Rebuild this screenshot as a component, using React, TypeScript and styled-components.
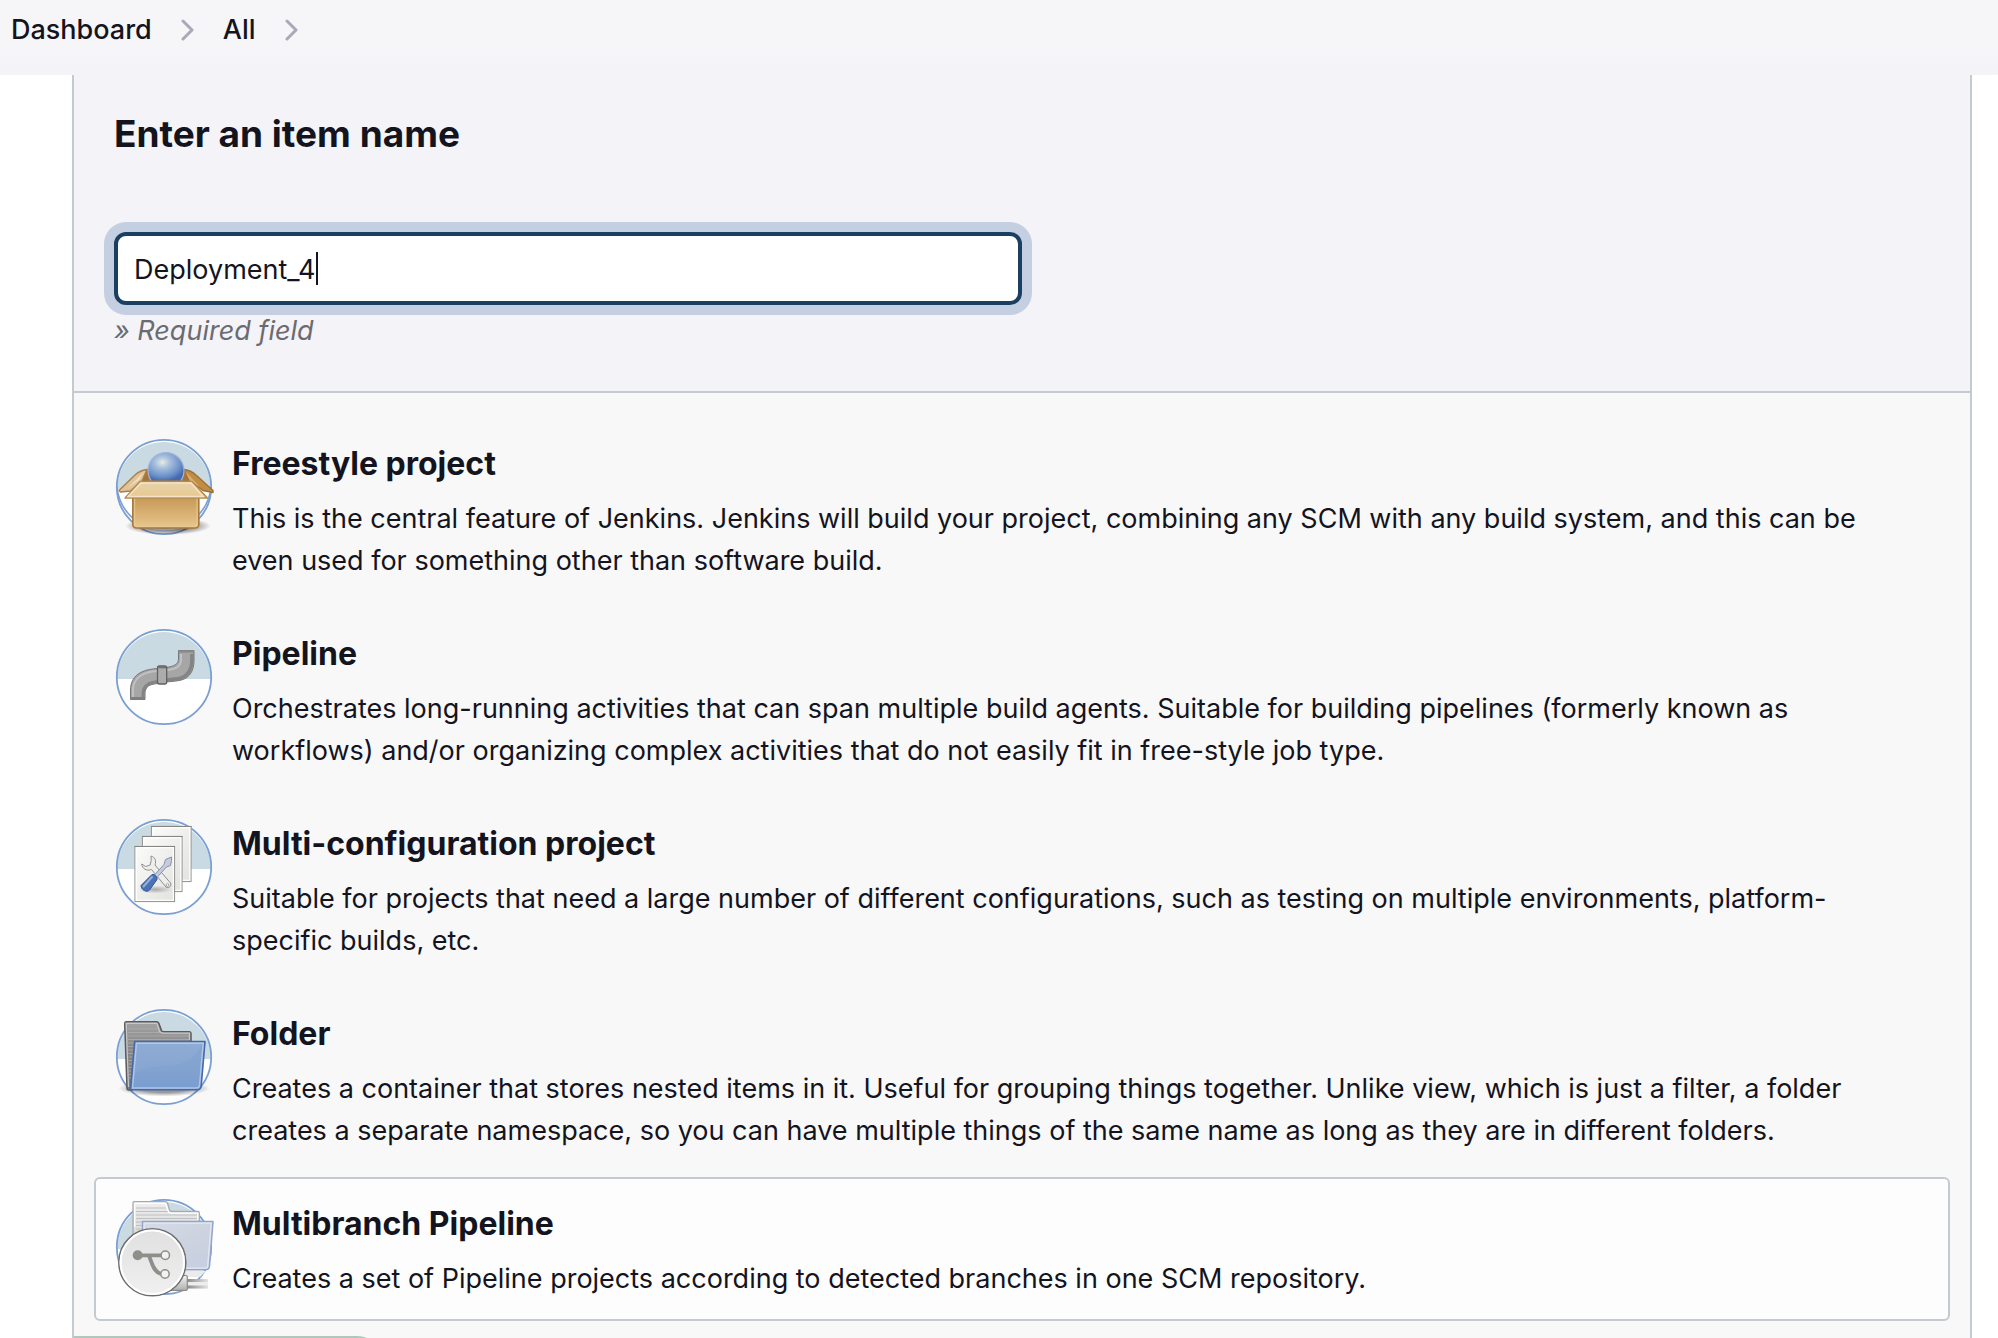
import React, { useLayoutEffect, useRef, useState } from "react";
import styled, { createGlobalStyle } from "styled-components";

const GlobalStyle = createGlobalStyle`
  *, *::before, *::after { box-sizing: border-box; }
  body {
    margin: 0;
    background: #ffffff;
    color: #14141f;
    font-family: Inter, "Noto Sans", sans-serif;
    font-size: 27px;
    line-height: 42px;
  }
`;

const Page = styled.div`
  display: flex;
  flex-direction: column;
  height: 100vh;
  overflow: hidden;
`;

const BreadcrumbBar = styled.nav`
  flex: none;
  background: linear-gradient(#f6f6f8 60%, #f4f4f8);
  padding: 9px 11px 24px;
`;

const Crumbs = styled.ol`
  display: flex;
  align-items: center;
  gap: 29px;
  margin: 0;
  padding: 0;
  list-style: none;
`;

const Crumb = styled.li`
  display: flex;
  align-items: center;
  gap: 28px;
`;

const CrumbLink = styled.a`
  color: inherit;
  font-size: 27px;
  font-weight: 500;
  text-decoration: none;
`;

const Panel = styled.main`
  flex: 1 0 auto;
  margin: 0 26px 0 72px;
  border: solid #c4cacf;
  border-width: 0 2px;
  background: #f8f8f8;
`;

const NameSection = styled.section`
  background: #f3f3f8;
  border-bottom: 2px solid #c4cacf;
  padding: 34px 40px 39px;
`;

const Heading = styled.label`
  display: block;
  margin-bottom: 73px;
  font-size: 37px;
  font-weight: 700;
  line-height: 50px;
`;

const FieldWrap = styled.div`
  position: relative;
  width: 50%;
  max-width: 908px;
`;

const NameInput = styled.input`
  display: block;
  width: 100%;
  height: 73px;
  padding: 2px 16px 0;
  border: 4px solid #1a3f60;
  border-radius: 12px;
  outline: none;
  box-shadow: 0 0 0 10px #c4d0e2;
  background: #ffffff;
  color: inherit;
  caret-color: transparent;
  font: inherit;
`;

const Caret = styled.span`
  position: absolute;
  top: 20px;
  width: 2px;
  height: 33px;
  background: #14141f;
`;

const Hint = styled.p`
  margin: 5px 0 0;
  color: #6b6b70;
  font-style: italic;
`;

const ItemList = styled.ul`
  display: flex;
  flex-direction: column;
  gap: 4px;
  margin: 0;
  padding: 24px 20px 15px;
  list-style: none;
`;

const ItemCard = styled.label<{ $active: boolean }>`
  display: flex;
  align-items: flex-start;
  gap: 20px;
  padding: 20px 20px 19px;
  border: 2px solid ${(p) => (p.$active ? "#c4cacf" : "transparent")};
  border-radius: 6px;
  background: ${(p) => (p.$active ? "#fdfdfd" : "transparent")};
  cursor: pointer;
`;

const ItemRadio = styled.input`
  appearance: none;
  width: 0;
  height: 0;
  margin: 0 -20px 0 0;
`;

const ItemIcon = styled.svg`
  flex: none;
  width: 96px;
  height: 96px;
  overflow: visible;
`;

const ItemText = styled.div`
  flex: 1;
  padding-right: 40px;
`;

const ItemTitle = styled.span`
  display: block;
  margin-bottom: 9px;
  font-size: 32px;
  font-weight: 700;
  line-height: 50px;
`;

const ItemDescription = styled.p`
  margin: 0;
`;

const FooterTab = styled.div`
  width: 304px;
  height: 80px;
  border-radius: 0 20px 0 0;
  background: #b0c8bb;
`;

const Chevron = () => (
  <svg width="14" height="22" viewBox="0 0 14 22" fill="none" aria-hidden="true">
    <path d="M3 2l9 9-9 9" stroke="#a9a9b8" strokeWidth="3" strokeLinecap="round" strokeLinejoin="round" />
  </svg>
);

const Disc = () => (
  <>
    <circle cx="48" cy="48" r="47" fill="#ffffff" />
    <path d="M1 50a47 47 0 0 1 94 0z" fill="#c9dae3" />
    <circle cx="48" cy="48" r="47.2" fill="none" stroke="#7a9fd3" strokeWidth="1.8" />
  </>
);

const FreestyleIcon = () => (
  <ItemIcon viewBox="0 0 96 96" aria-hidden="true">
    <defs>
      <radialGradient id="fsBall" cx="0.4" cy="0.35" r="0.68">
        <stop offset="0" stopColor="#e6ecdf" />
        <stop offset="0.3" stopColor="#a9c1de" />
        <stop offset="0.75" stopColor="#6a8fc9" />
        <stop offset="1" stopColor="#4469ad" />
      </radialGradient>
      <linearGradient id="fsBody" x1="0" y1="0" x2="0" y2="1">
        <stop offset="0" stopColor="#c39450" />
        <stop offset="1" stopColor="#e8c78d" />
      </linearGradient>
      <linearGradient id="fsFlap" x1="0" y1="0" x2="0" y2="1">
        <stop offset="0" stopColor="#e8d3ad" />
        <stop offset="1" stopColor="#e7c88f" />
      </linearGradient>
      <radialGradient id="fsShadow">
        <stop offset="0.5" stopColor="#000" stopOpacity="0.5" />
        <stop offset="1" stopColor="#000" stopOpacity="0" />
      </radialGradient>
    </defs>
    <Disc />
    <ellipse cx="52" cy="87" rx="43" ry="9" fill="url(#fsShadow)" />
    <path d="M1 48a47.2 47.2 0 0 0 94 0" fill="none" stroke="#7a9fd3" strokeWidth="1.6" />
    <path d="M31 30L68 30L77 44L23 44z" fill="#a4753a" />
    <path d="M31 30.5c-6 1-10 3.500-12 5.500L3 51.500l1.500 1.500 10-1L26 42z" fill="#dfc49a" stroke="#ad7f42" strokeWidth="1.400" strokeLinejoin="round" />
    <path d="M28 33L12 49l11-8z" fill="#f1e2c8" />
    <path d="M68 30.500c6 1 10 3.500 12 5.500l17 15.500v2l-10-2L75 42z" fill="#c08d46" stroke="#9d7035" strokeWidth="1.400" strokeLinejoin="round" />
    <path d="M69 32l5 10 10 6z" fill="#dcae6c" />
    <path d="M35 41.500a18 18 0 1 1 30 0z" fill="url(#fsBall)" />
    <path d="M35 41.500a18 18 0 1 1 30 0" fill="none" stroke="#a3b4da" strokeWidth="1.200" />
    <rect x="16.800" y="55" width="66" height="34" rx="3.500" fill="url(#fsBody)" stroke="#a8793c" strokeWidth="1.600" />
    <rect x="18.600" y="57" width="62.400" height="30" rx="2.500" fill="none" stroke="#e9cd9b" strokeOpacity="0.7" strokeWidth="1.200" />
    <path d="M24 42.500H76L91.500 59H9z" fill="url(#fsFlap)" stroke="#b58a4d" strokeWidth="1.400" strokeLinejoin="round" />
    <path d="M25 44H75L87 57.500H12z" fill="none" stroke="#f3e4c8" strokeWidth="1.400" />
  </ItemIcon>
);

const PipelineIcon = () => (
  <ItemIcon viewBox="0 0 96 96" aria-hidden="true">
    <Disc />
    <path d="M62.500 21.500H78V31C78 44 72 51 60 52L50 53V38.500C58 37.500 62.500 35 62.500 30z" fill="#a6a6a6" stroke="#777777" strokeWidth="1" />
    <path d="M75.800 25V31C75.800 43 69 49.500 59 50L50.500 51" fill="none" stroke="#848484" strokeWidth="3.400" />
    <path d="M65 25V31C64.500 38 60 40 51 41" fill="none" stroke="#c2c2c2" strokeWidth="2" />
    <path d="M62.500 22.500H78" stroke="#8b8b8b" strokeWidth="2.400" />
    <path d="M43 39.500C25 40 14.500 47 14.500 61V70.500H29V65C29 57 34 55 43 54.500z" fill="#a6a6a6" stroke="#777777" strokeWidth="1" />
    <path d="M43 52.500C32 53 27 57 27 65V68" fill="none" stroke="#848484" strokeWidth="3" />
    <path d="M42 42C27 42.500 17 49 17 61V68" fill="none" stroke="#c0c0c0" strokeWidth="2" />
    <path d="M14.500 69.300H29" stroke="#808080" strokeWidth="2.600" />
    <rect x="41.500" y="37" width="9.200" height="18" rx="2" fill="#acacac" stroke="#606060" strokeWidth="1.300" />
    <path d="M42.500 38.500H50" stroke="#707070" strokeWidth="1.600" />
  </ItemIcon>
);

const Sheet = ({ x, y }: { x: number; y: number }) => (
  <>
    <rect x={x} y={y} width="39.500" height="55" fill="url(#mcSheet)" stroke="#999996" strokeWidth="1.200" />
    <rect x={x + 1.2} y={y + 1.2} width="37.100" height="52.600" fill="none" stroke="#ffffff" strokeWidth="1.200" />
    <path d={`M${x - 0.5} ${y}h40.500`} stroke="#858582" strokeWidth="1" />
  </>
);

const MultiConfigIcon = () => (
  <ItemIcon viewBox="0 0 96 96" aria-hidden="true">
    <defs>
      <linearGradient id="mcSheet" x1="0" y1="0" x2="1" y2="1">
        <stop offset="0" stopColor="#fbfbfa" />
        <stop offset="1" stopColor="#e2e2df" />
      </linearGradient>
      <radialGradient id="mcShadow">
        <stop offset="0" stopColor="#000" stopOpacity="0.28" />
        <stop offset="1" stopColor="#000" stopOpacity="0" />
      </radialGradient>
    </defs>
    <Disc />
    <Sheet x={35.5} y={7.5} />
    <Sheet x={26.5} y={17.5} />
    <Sheet x={19} y={27.5} />
    <ellipse cx="39" cy="70.500" rx="17" ry="4" fill="url(#mcShadow)" />
    <path
      d="M35 37c4 1 5.500 5 4 9L54.500 64c1.500 2.500-1.500 6-4.500 4L35.500 50.500c-5 2-9.500-1-9.800-5.500l4 2.500 4.500-1.500 1-4.500z"
      fill="#eeeeec"
      stroke="#8f908d"
      strokeWidth="1"
      strokeLinejoin="round"
    />
    <circle cx="51.500" cy="66" r="1.400" fill="#ffffff" stroke="#8f908d" strokeWidth="0.800" />
    <path d="M55.500 38l-6 2.500-1.500 5L38 56.500l2.500 2.500L50.500 48l4-1.500 1-5z" fill="#c5cbdd" stroke="#8089a0" strokeWidth="0.900" strokeLinejoin="round" />
    <path d="M36 55.500c2.500-.500 5.500 2 5 5L33.500 71c-2.500 3-8.500 0-8.500-4.500z" fill="#4a72b4" stroke="#2f5594" strokeWidth="1" />
    <path d="M36 58l-8.500 9.500" stroke="#93b1df" strokeWidth="2" strokeLinecap="round" />
  </ItemIcon>
);

const FolderIcon = () => (
  <ItemIcon viewBox="0 0 96 96" aria-hidden="true">
    <defs>
      <linearGradient id="fdBack" x1="0" y1="0" x2="0" y2="1">
        <stop offset="0" stopColor="#a3a3a3" />
        <stop offset="0.4" stopColor="#868686" />
        <stop offset="1" stopColor="#7a7a7a" />
      </linearGradient>
      <linearGradient id="fdFront" x1="0" y1="0" x2="0" y2="1">
        <stop offset="0" stopColor="#8facd4" />
        <stop offset="0.6" stopColor="#86a5d1" />
        <stop offset="1" stopColor="#7499d0" />
      </linearGradient>
      <radialGradient id="fdShadow">
        <stop offset="0.5" stopColor="#000" stopOpacity="0.4" />
        <stop offset="1" stopColor="#000" stopOpacity="0" />
      </radialGradient>
    </defs>
    <Disc />
    <ellipse cx="48" cy="79.500" rx="46" ry="8" fill="url(#fdShadow)" />
    <path d="M10 12.700H40.500C42.500 12.700 43 14 43.500 16L45.500 21.500Q46 22.700 48 22.700H73.500Q75 22.700 75 24.500V40L16 81H12.500Q11 81 11 79L8.700 14.500Q8.700 12.700 10 12.700z" fill="url(#fdBack)" stroke="#5b5b5b" strokeWidth="1.500" />
    <path d="M12 20H42M12 23.500H44M12 27H73M12 30.500H73M12 34H18M12 37.500H18M12 41H18M12 44.500H17M12.500 48H17M12.500 51.500H17M12.500 55H17M12.500 58.500H16M12.500 62H16M13 65.500H16M13 69H15" stroke="#b0b0b0" strokeOpacity="0.7" strokeWidth="1.200" />
    <path d="M12.500 78L10.200 14.300H41L43.500 22.500 46 24.200H73.500V31" fill="none" stroke="#c8c8c8" strokeWidth="1.200" />
    <path d="M18.700 32.500H89L85.200 77Q84.600 80.800 81.500 80.800H14.500z" fill="url(#fdFront)" stroke="#4469a9" strokeWidth="1.600" strokeLinejoin="round" />
    <path d="M17.500 66C26 57 39 58 54 57C70 55 80 49 86 34.500L83 77C82.500 79 81.500 79.200 79.500 79.200H16.500z" fill="#7ea0d0" fillOpacity="0.5" />
    <path d="M20.500 34.300H87.200L83.500 76.500Q83 79 80.500 79H16.500z" fill="none" stroke="#b9cdea" strokeOpacity="0.85" strokeWidth="1.400" />
  </ItemIcon>
);

const MultibranchIcon = () => (
  <ItemIcon viewBox="0 0 96 96" aria-hidden="true">
    <defs>
      <linearGradient id="mbBack" x1="0" y1="0" x2="0" y2="1">
        <stop offset="0" stopColor="#eeeeee" />
        <stop offset="0.5" stopColor="#dadada" />
      </linearGradient>
      <linearGradient id="mbFront" x1="0" y1="0" x2="1" y2="1">
        <stop offset="0" stopColor="#d5dbe6" />
        <stop offset="0.5" stopColor="#cdd4e0" />
        <stop offset="1" stopColor="#c4cedf" />
      </linearGradient>
      <linearGradient id="mbCable" x1="0" y1="0" x2="1" y2="0">
        <stop offset="0" stopColor="#8a8a88" />
        <stop offset="1" stopColor="#8a8a88" stopOpacity="0.1" />
      </linearGradient>
      <linearGradient id="mbBadge" x1="0" y1="0" x2="0" y2="1">
        <stop offset="0" stopColor="#e0e0e0" />
        <stop offset="1" stopColor="#f0f0f0" />
      </linearGradient>
      <linearGradient id="mbPlug" x1="0" y1="0" x2="0" y2="1">
        <stop offset="0" stopColor="#f2f2f2" />
        <stop offset="1" stopColor="#b0b0ae" />
      </linearGradient>
    </defs>
    <Disc />
    <path d="M18 2.700H49C51 2.700 51.500 3.500 52 5.500L53.500 11Q54 12.500 56 12.500H82Q83.300 12.500 83.300 14V26L30 70H17V4Q17 2.700 18 2.700z" fill="url(#mbBack)" stroke="#aaaaaa" strokeWidth="1.300" />
    <path d="M20 9H50M20 12.500H52M20 16H81M20 19.500H81M20 23H26M20 26.500H26M20 30H26" stroke="#c0c0c0" strokeWidth="1" />
    <path d="M18.700 28V4.300H49.500L52.500 13 55 14.200H81.700V21" fill="none" stroke="#ffffff" strokeWidth="1.200" />
    <path d="M62 72H90L84 78H62z" fill="#ebebeb" />
    <path d="M26.500 22.500H97L93.500 67.500Q93 70.800 89.500 70.800H26.500z" fill="url(#mbFront)" stroke="#8fa5cf" strokeWidth="1.500" strokeLinejoin="round" />
    <path d="M28.200 36V24.200H95.200L91.700 67Q91.500 69.200 89 69.200H66" fill="none" stroke="#e3e8f0" strokeWidth="1.300" />
    <rect x="71" y="80.300" width="21" height="9.500" fill="#ededed" />
    <rect x="71" y="80" width="21" height="3" fill="url(#mbCable)" />
    <rect x="71" y="86.500" width="21" height="3" fill="url(#mbCable)" />
    <path d="M58 79l9-2.500h3q1.300 0 1.300 1.300V90q0 1.300-1.300 1.300H55z" fill="url(#mbPlug)" stroke="#8a8a88" strokeWidth="1.200" />
    <circle cx="36.300" cy="63.300" r="33.500" fill="url(#mbBadge)" stroke="#6e6e6e" strokeWidth="1.500" />
    <circle cx="36.300" cy="63.300" r="31.700" fill="none" stroke="#ffffff" strokeWidth="2" />
    <circle cx="21.700" cy="56.300" r="5" fill="#8d8f88" />
    <path d="M22 56.300H45M32.500 56.300C35.500 60 36 72.500 45 74.800" fill="none" stroke="#8d8f88" strokeWidth="3.800" />
    <circle cx="49.300" cy="56.300" r="4.200" fill="#f2f2f2" stroke="#8d8f88" strokeWidth="1.500" />
    <circle cx="49" cy="75" r="4.200" fill="#f2f2f2" stroke="#8d8f88" strokeWidth="1.500" />
  </ItemIcon>
);

const ITEMS = [
  {
    id: "freestyle",
    Icon: FreestyleIcon,
    title: "Freestyle project",
    text: "This is the central feature of Jenkins. Jenkins will build your project, combining any SCM with any build system, and this can be even used for something other than software build.",
  },
  {
    id: "pipeline",
    Icon: PipelineIcon,
    title: "Pipeline",
    text: "Orchestrates long-running activities that can span multiple build agents. Suitable for building pipelines (formerly known as workflows) and/or organizing complex activities that do not easily fit in free-style job type.",
  },
  {
    id: "matrix",
    Icon: MultiConfigIcon,
    title: "Multi-configuration project",
    text: "Suitable for projects that need a large number of different configurations, such as testing on multiple environments, platform-specific builds, etc.",
  },
  {
    id: "folder",
    Icon: FolderIcon,
    title: "Folder",
    text: "Creates a container that stores nested items in it. Useful for grouping things together. Unlike view, which is just a filter, a folder creates a separate namespace, so you can have multiple things of the same name as long as they are in different folders.",
  },
  {
    id: "multibranch",
    Icon: MultibranchIcon,
    title: "Multibranch Pipeline",
    text: "Creates a set of Pipeline projects according to detected branches in one SCM repository.",
  },
];

const NameField = () => {
  const [name, setName] = useState("Deployment_4");
  const [caretLeft, setCaretLeft] = useState(20);
  const input = useRef<HTMLInputElement>(null);

  useLayoutEffect(() => {
    const ctx = document.createElement("canvas").getContext("2d");
    if (!ctx || !input.current) return;
    const style = getComputedStyle(input.current);
    ctx.font = `${style.fontSize} ${style.fontFamily}`;
    setCaretLeft(20 + Math.round(ctx.measureText(name).width));
  }, [name]);

  return (
    <FieldWrap>
      <NameInput id="name" ref={input} value={name} onChange={(e) => setName(e.target.value)} autoComplete="off" spellCheck={false} />
      <Caret style={{ left: caretLeft }} />
    </FieldWrap>
  );
};

export default function App() {
  const [selected, setSelected] = useState("multibranch");
  return (
    <>
      <GlobalStyle />
      <Page>
        <BreadcrumbBar aria-label="Breadcrumb">
          <Crumbs>
            {["Dashboard", "All"].map((crumb) => (
              <Crumb key={crumb}>
                <CrumbLink href="#">{crumb}</CrumbLink>
                <Chevron />
              </Crumb>
            ))}
          </Crumbs>
        </BreadcrumbBar>
        <Panel>
          <NameSection>
            <Heading htmlFor="name">Enter an item name</Heading>
            <NameField />
            <Hint>» Required field</Hint>
          </NameSection>
          <ItemList>
            {ITEMS.map(({ id, Icon, title, text }) => (
              <li key={id}>
                <ItemCard $active={selected === id}>
                  <ItemRadio type="radio" name="mode" value={id} checked={selected === id} onChange={() => setSelected(id)} />
                  <Icon />
                  <ItemText>
                    <ItemTitle>{title}</ItemTitle>
                    <ItemDescription>{text}</ItemDescription>
                  </ItemText>
                </ItemCard>
              </li>
            ))}
          </ItemList>
          <FooterTab />
        </Panel>
      </Page>
    </>
  );
}
